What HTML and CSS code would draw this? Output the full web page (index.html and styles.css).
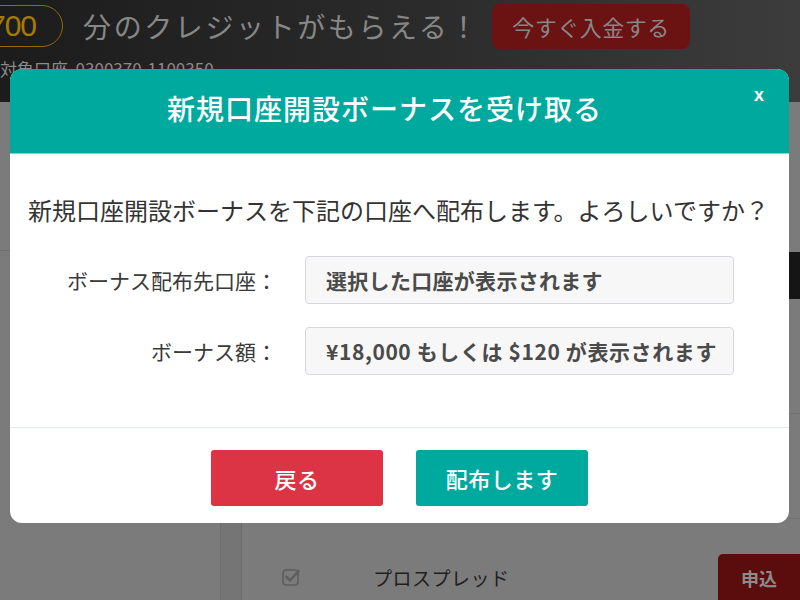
FILE: index.html
```html
<!DOCTYPE html>
<html lang="ja">
<head>
<meta charset="utf-8">
<title>新規口座開設ボーナス</title>
<link rel="stylesheet" href="styles.css">
</head>
<body>
<div class="page">
  <header class="topbar">
    <div class="promo">
      <span class="pill">700</span>
      <span class="promo-text">分のクレジットがもらえる！</span>
      <span class="deposit-btn">今すぐ入金する</span>
    </div>
    <div class="account">対象口座&nbsp;&nbsp;0300370-1100350</div>
  </header>
  <main class="main">
    <aside class="sidebar"><div class="side-block"></div></aside>
    <div class="stripe"></div>
    <section class="content">
      <div class="table-head"></div>
      <div class="trow trow-1"></div>
      <div class="trow trow-2"></div>
      <div class="trow trow-last">
        <span class="check">
          <svg width="18" height="18" viewBox="0 0 18 18"><rect x="1" y="2" width="15" height="15" rx="3" fill="none" stroke="#5e5e5e" stroke-width="1.7"/><path d="M4.5 9 L8 12.5 L16.5 3" fill="none" stroke="#5e5e5e" stroke-width="2.6" stroke-linecap="round" stroke-linejoin="round"/></svg>
        </span>
        <span class="plan">プロスプレッド</span>
        <span class="apply-btn">申込</span>
      </div>
    </section>
  </main>

  <div class="modal">
    <div class="modal-header">
      <h1 class="modal-title">新規口座開設ボーナスを受け取る</h1>
      <span class="close">x</span>
    </div>
    <div class="modal-body">
      <p class="message">新規口座開設ボーナスを下記の口座へ配布します。よろしいですか？</p>
      <div class="form-grid">
        <div class="label">ボーナス配布先口座：</div>
        <div class="field">選択した口座が表示されます</div>
        <div class="label">ボーナス額：</div>
        <div class="field field-amount">¥18,000 もしくは $120 が表示されます</div>
      </div>
    </div>
    <div class="modal-footer">
      <button class="btn btn-back">戻る</button>
      <button class="btn btn-ok">配布します</button>
    </div>
  </div>
</div>
</body>
</html>
```

FILE: styles.css
```css
* { box-sizing: border-box; }
html, body { margin: 0; padding: 0; }
body {
  width: 800px;
  height: 600px;
  overflow: hidden;
  font-family: "Noto Sans CJK JP", "Noto Sans", sans-serif;
  background: #7b7b7b;
}
.page {
  position: relative;
  width: 800px;
  height: 600px;
  display: flex;
  flex-direction: column;
}

/* top bar (dimmed) */
.topbar {
  height: 103px;
  background: linear-gradient(90deg, #1c1c1c 0%, #2a2a2a 50%, #3c3c3c 100%);
  overflow: hidden;
}
.promo {
  display: flex;
  align-items: center;
  height: 50px;
  padding-top: 2px;
}
.pill {
  margin-left: -24px;
  height: 42px;
  display: flex;
  align-items: center;
  padding: 0 26px 0 12px;
  border: 1.5px solid #8c6a00;
  border-radius: 22px;
  color: #a57c00;
  font-family: "Liberation Sans", sans-serif;
  font-size: 30px;
  letter-spacing: -1px;
}
.promo-text {
  margin-left: 20px;
  color: #878787;
  font-size: 28px;
  letter-spacing: 2.6px;
  line-height: 1;
}
.deposit-btn {
  margin-left: 12px;
  width: 198px;
  height: 45px;
  display: flex;
  align-items: center;
  justify-content: center;
  background: #6b1212;
  border-radius: 8px;
  color: #878787;
  font-size: 22px;
  letter-spacing: 0.5px;
}
.account {
  margin-top: 9px;
  color: #8a8a8a;
  font-size: 17px;
  line-height: 20px;
  white-space: nowrap;
}

/* background content (dimmed) */
.main {
  flex: 1;
  display: flex;
}
.sidebar {
  width: 220px;
  background: #7b7b7b;
}
.side-block {
  height: 149px;
  border-bottom: 1px solid #6f6f6f;
}
.stripe {
  width: 22px;
  background: #757575;
  border-left: 1px solid #6c6c6c;
  border-right: 1px solid #6c6c6c;
}
.content {
  flex: 1;
  display: flex;
  flex-direction: column;
}
.table-head {
  margin-top: 150px;
  margin-left: 20px;
  height: 47px;
  background: #151515;
}
.trow {
  border-bottom: 1px solid #727272;
}
.trow-1 { height: 115px; }
.trow-2 { height: 105px; }
.trow-last {
  border: 0;
  margin-top: 35px;
  height: 46px;
  display: flex;
  align-items: center;
}
.check {
  margin-left: 40px;
  width: 18px;
  height: 18px;
  display: flex;
}
.plan {
  margin-left: 73px;
  color: #1f1f1f;
  font-size: 19px;
  letter-spacing: 0.5px;
}
.apply-btn {
  margin-left: auto;
  align-self: stretch;
  width: 82px;
  background: #5b0c0c;
  border-top-left-radius: 5px;
  color: #8c8c8c;
  font-size: 18px;
  font-weight: bold;
  display: flex;
  align-items: center;
  justify-content: center;
  padding-top: 2px;
}

/* modal */
.modal {
  position: absolute;
  left: 10px;
  top: 69px;
  width: 779px;
  height: 454px;
  background: #fff;
  border-radius: 12px;
  overflow: hidden;
  display: flex;
  flex-direction: column;
}
.modal-header {
  position: relative;
  height: 85px;
  background: #00a99e;
  border-bottom: 1px solid #7fd6cf;
  display: flex;
  align-items: center;
  justify-content: center;
  padding: 0 30px 6px 0;
}
.modal-title {
  margin: 0;
  color: #fff;
  font-size: 28px;
  font-weight: 500;
  letter-spacing: 1px;
}
.close {
  position: absolute;
  right: 25px;
  top: 16px;
  color: #fff;
  font-family: "Liberation Sans", sans-serif;
  font-size: 18px;
  font-weight: bold;
}
.modal-body {
  height: 274px;
  padding: 39px 0 0 18px;
  border-bottom: 1px solid #e3e8ec;
}
.message {
  margin: 0;
  color: #333;
  font-size: 24px;
  line-height: 34px;
  white-space: nowrap;
}
.form-grid {
  margin-top: 29px;
  margin-left: -18px;
  display: grid;
  grid-template-columns: 267px 429px;
  column-gap: 28px;
  row-gap: 23px;
}
.label {
  display: flex;
  align-items: center;
  justify-content: flex-end;
  color: #3a3a3a;
  font-size: 21px;
  white-space: nowrap;
}
.field {
  height: 48px;
  display: flex;
  align-items: center;
  padding-left: 20px;
  background: #f7f7f8;
  border: 1px solid #d5d9de;
  border-radius: 4px;
  color: #4a4a4a;
  font-size: 21px;
  font-weight: bold;
  letter-spacing: 0.3px;
  white-space: nowrap;
}
.field-amount {
  letter-spacing: 0.6px;
}
.modal-footer {
  flex: 1;
  display: flex;
  justify-content: center;
  align-items: flex-start;
  gap: 33px;
  padding-top: 22px;
}
.btn {
  width: 172px;
  height: 56px;
  border: 0;
  border-radius: 3px;
  color: #fff;
  font-family: "Noto Sans CJK JP", "Noto Sans", sans-serif;
  font-size: 22px;
  font-weight: 500;
  letter-spacing: 0.5px;
  padding: 0;
}
.btn-back { background: #dc3444; }
.btn-ok { background: #00a99e; }
```
